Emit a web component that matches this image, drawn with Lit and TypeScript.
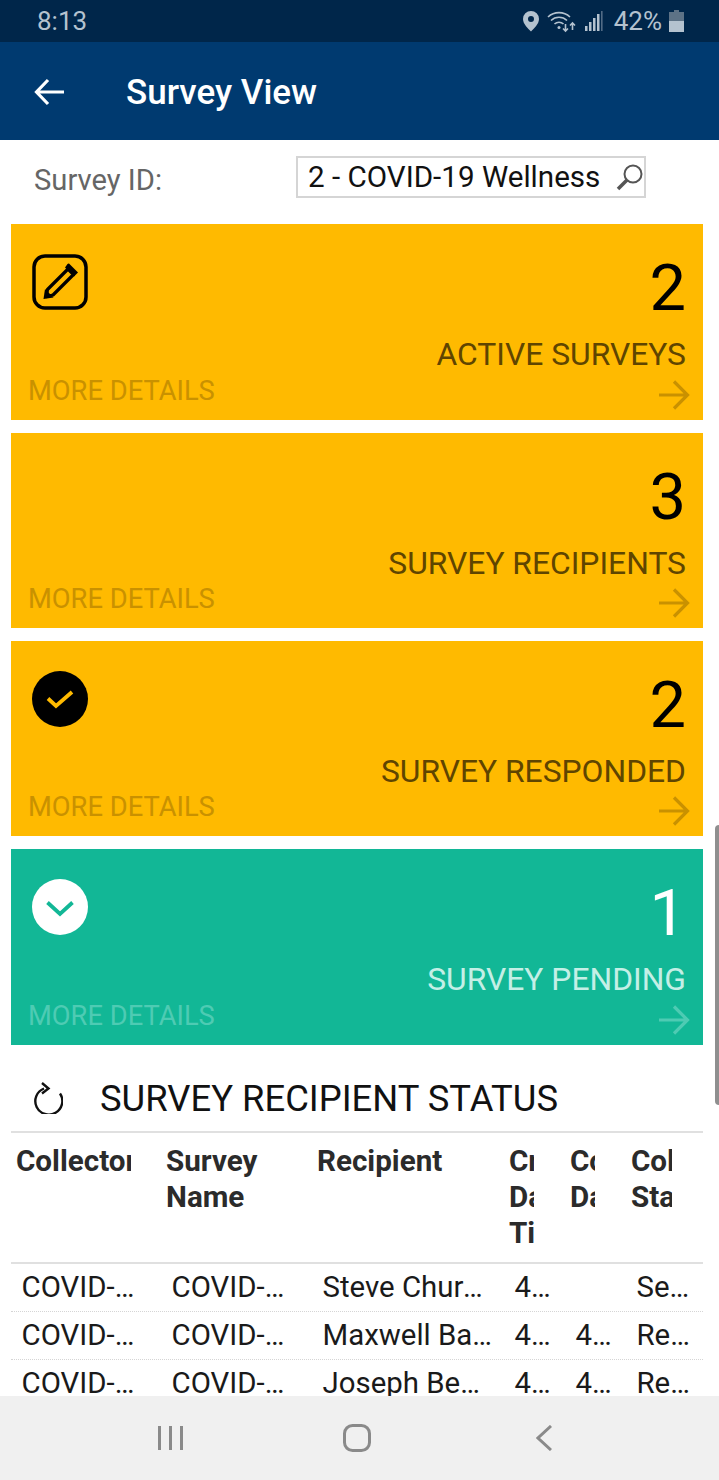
import { LitElement, css, html, svg } from 'lit'
import { customElement } from 'lit/decorators.js'

type Card = { n: string; label: string; icon: 'edit' | 'check' | 'chevron' | null; teal?: boolean }

const CARDS: Card[] = [
  { n: '2', label: 'ACTIVE SURVEYS', icon: 'edit' },
  { n: '3', label: 'SURVEY RECIPIENTS', icon: null },
  { n: '2', label: 'SURVEY RESPONDED', icon: 'check' },
  { n: '1', label: 'SURVEY PENDING', icon: 'chevron', teal: true },
]

const HEADERS = ['Collector', 'Survey Name', 'Recipient', 'Created Date Time', 'Completed Date', 'Collector Status']

const ROWS = [
  ['COVID-19 Wellness', 'COVID-19 Wellness', 'Steve Churchill', '4/10/2020', '', 'Sent'],
  ['COVID-19 Wellness', 'COVID-19 Wellness', 'Maxwell Barnes', '4/10/2020', '4/10/2020', 'Responded'],
  ['COVID-19 Wellness', 'COVID-19 Wellness', 'Joseph Bennett', '4/10/2020', '4/10/2020', 'Responded'],
]

const cardIcons = {
  edit: svg`<svg class="icon" viewBox="0 0 56 56" fill="none">
    <rect x="2" y="2" width="52" height="52" rx="11" stroke="#000" stroke-width="3.500"/>
    <path d="M14.500 42.500l1-7L36 15l5.500 5.500L21 41z" stroke="#000" stroke-width="3.200" stroke-linejoin="round"/>
    <path d="M37 9.500l9 9-4 4-9-9 2.500-3.500a1.500 1.500 0 0 1 1.500-.5z" fill="#000"/>
    <path d="M11.500 45l1.500-10 8.500 8.500z" fill="#000"/>
  </svg>`,
  check: svg`<svg class="icon" viewBox="0 0 56 56">
    <circle cx="28" cy="28" r="28" fill="#000"/>
    <path d="M16 27.500l8 7.500 16-14" fill="none" stroke="#ffba00" stroke-width="3.800"/>
  </svg>`,
  chevron: svg`<svg class="icon" viewBox="0 0 56 56">
    <circle cx="28" cy="28" r="28" fill="#fff"/>
    <path d="M15.500 23.500L28 35l12.500-11.500" fill="none" stroke="#12b796" stroke-width="3.800"/>
  </svg>`,
}

@customElement('app-root')
export class AppRoot extends LitElement {
  render() {
    return html`
      <div class="status">
        <span class="time">8:13</span>
        <div class="status-right">
          <svg width="18" height="22" viewBox="0 0 18 22">
            <path fill-rule="evenodd" fill="#b4c2cf" d="M9 1a8 8 0 0 1 8 8c0 5-5 9.500-8 12.500C6 18.500 1 14 1 9a8 8 0 0 1 8-8zm0 5a3 3 0 1 0 0 6 3 3 0 0 0 0-6z"/>
          </svg>
          <svg width="30" height="24" viewBox="0 0 30 24" fill="none" stroke="#b4c2cf" stroke-width="1.600">
            <path d="M1 8a16 16 0 0 1 22 0M4 11.500a11.500 11.500 0 0 1 16 0M7.500 15a6.500 6.500 0 0 1 9 0"/>
            <circle cx="12" cy="18.500" r="1.500" fill="#b4c2cf" stroke="none"/>
            <path d="M18.500 15v7M16 19.500l2.500 2.500 2.500-2.500M25.500 21v-7M23 16.500l2.500-2.500 2.500 2.500"/>
          </svg>
          <svg class="signal" width="20" height="22" viewBox="0 0 20 22" fill="#b4c2cf">
            <rect x="1" y="16" width="2.500" height="5"/>
            <rect x="5" y="12" width="2.500" height="9"/>
            <rect x="9" y="8" width="2.500" height="13"/>
            <rect x="13" y="4" width="2.500" height="17"/>
            <rect x="17" y="1" width="1.600" height="20" opacity=".45"/>
          </svg>
          <span class="pct">42%</span>
          <svg width="15" height="22" viewBox="0 0 15 22">
            <path fill="#5d7286" d="M5 0h5v2h5v20H0V2h5z"/>
            <rect x="0" y="11" width="15" height="11" fill="#b4c2cf"/>
          </svg>
        </div>
      </div>

      <header class="bar">
        <svg class="back" width="30" height="28" viewBox="0 0 30 28" fill="none" stroke="#fff" stroke-width="3.200">
          <path d="M30 14H3M14 2L2.500 14 14 26"/>
        </svg>
        <span class="title">Survey View</span>
      </header>

      <div class="content">
        <div class="filter">
          <span class="filter-label">Survey ID:</span>
          <div class="search">
            <span>2 - COVID-19 Wellness</span>
            <svg width="28" height="28" viewBox="0 0 28 28" fill="none" stroke="#555">
              <circle cx="17" cy="11" r="8.500" stroke-width="2"/>
              <path d="M11 17L2 26" stroke-width="3.500"/>
            </svg>
          </div>
        </div>

        <div class="cards">
          ${CARDS.map(
            (c) => html`
              <div class="card ${c.teal ? 'teal' : ''}">
                <div class="card-top">
                  <div class="icon-box">${c.icon ? cardIcons[c.icon] : ''}</div>
                  <div class="figures">
                    <div class="num">${c.n}</div>
                    <div class="label">${c.label}</div>
                  </div>
                </div>
                <div class="card-foot">
                  <span class="more">MORE DETAILS</span>
                  <svg class="arrow" width="32" height="30" viewBox="0 0 32 30" fill="none" stroke="currentColor" stroke-width="3.200">
                    <path d="M1 15h28M16 1.500L29.500 15 16 28.500"/>
                  </svg>
                </div>
              </div>
            `,
          )}
        </div>

        <div class="section">
          <svg width="30" height="32" viewBox="0 0 30 32" fill="none" stroke="#111" stroke-width="2.400">
            <path d="M11 6.500a13.500 13.500 0 1 0 16 5M9 1l6.500 5.500L9 11.500"/>
          </svg>
          <span>SURVEY RECIPIENT STATUS</span>
        </div>

        <div class="table">
          <div class="row head">
            ${HEADERS.map((h) => html`<div class="th">${h}</div>`)}
          </div>
          ${ROWS.map(
            (r) => html`
              <div class="row body">
                ${r.map((v) => html`<div class="td">${v}</div>`)}
              </div>
            `,
          )}
        </div>
        <div class="scroll-thumb"></div>
      </div>

      <nav class="nav">
        <svg width="26" height="26" viewBox="0 0 26 26" fill="#8a8a8a">
          <rect x="0" y="1" width="3" height="24"/>
          <rect x="11" y="1" width="3" height="24"/>
          <rect x="22" y="1" width="3" height="24"/>
        </svg>
        <svg width="28" height="28" viewBox="0 0 28 28" fill="none" stroke="#8a8a8a" stroke-width="3">
          <rect x="1.500" y="1.500" width="25" height="25" rx="8"/>
        </svg>
        <svg width="16" height="26" viewBox="0 0 16 26" fill="none" stroke="#8a8a8a" stroke-width="3">
          <path d="M15 1L2 13l13 12"/>
        </svg>
      </nav>
    `
  }

  static styles = css`
    :host {
      display: flex;
      flex-direction: column;
      height: 1480px;
      overflow: hidden;
      font-family: Roboto, 'Liberation Sans', sans-serif;
      background: #fff;
    }

    .status {
      flex: none;
      height: 42px;
      display: flex;
      align-items: center;
      justify-content: space-between;
      padding: 0 35px 0 37px;
      box-sizing: border-box;
      background: #00264a;
      color: #b4c2cf;
      font-size: 26px;
    }

    .status-right {
      display: flex;
      align-items: center;
      gap: 7px;
    }

    .pct {
      margin-left: 3px;
    }

    .bar {
      flex: none;
      height: 98px;
      box-sizing: border-box;
      display: flex;
      align-items: center;
      gap: 62px;
      padding: 2px 0 0 34px;
      background: #003a70;
      color: #fff;
    }

    .title {
      font-size: 35px;
      font-weight: 500;
    }

    .content {
      flex: 1;
      min-height: 0;
      position: relative;
      overflow: hidden;
    }

    .filter {
      height: 84px;
      display: flex;
      align-items: flex-start;
      padding: 16px 73px 0 34px;
      box-sizing: border-box;
      justify-content: space-between;
    }

    .filter-label {
      margin-top: 7px;
      font-size: 29.200px;
      color: #666;
    }

    .search {
      width: 350px;
      height: 42px;
      box-sizing: border-box;
      border: 2px solid #d5d5d5;
      display: flex;
      align-items: center;
      justify-content: space-between;
      padding: 0 0 0 10px;
      font-size: 29.600px;
      color: #111;
    }

    .cards {
      display: flex;
      flex-direction: column;
      gap: 13px;
      padding: 0 16px 0 11px;
    }

    .card {
      height: 195px;
      box-sizing: border-box;
      display: flex;
      flex-direction: column;
      justify-content: space-between;
      padding: 30px 13px 10px 18px;
      background: #ffba00;
      color: #c99100;
    }

    .card:first-child,
    .card:last-child {
      height: 196px;
    }

    .card.teal {
      background: #12b796;
      color: #4ecbb3;
    }

    .card-top {
      display: flex;
      justify-content: space-between;
    }

    .icon-box {
      margin-left: 3px;
    }

    .icon {
      display: block;
      width: 56px;
      height: 56px;
    }

    .figures {
      text-align: right;
      margin-top: -13px;
      margin-right: 4px;
    }

    .num {
      font-size: 65px;
      line-height: 94px;
      color: #000;
    }

    .label {
      font-size: 31.800px;
      line-height: 38px;
      color: #5f4500;
    }

    .teal .num {
      color: #fff;
    }

    .teal .label {
      color: #c4efe6;
    }

    .card-foot {
      display: flex;
      justify-content: space-between;
      align-items: flex-end;
    }

    .more {
      font-size: 27.300px;
      line-height: 34px;
      padding-bottom: 2px;
      margin-left: -1px;
    }

    .arrow {
      display: block;
    }

    .section {
      display: flex;
      align-items: center;
      gap: 37px;
      height: 66px;
      margin-top: 20px;
      padding-left: 33px;
      font-size: 36.400px;
      color: #111;
    }

    .table {
      margin: 0 16px 0 11px;
      border-top: 2px solid #e0e0e0;
    }

    .row {
      display: grid;
      grid-template-columns: 150px 151px 192px 61px 61px 77px;
    }

    .row.head {
      height: 131px;
      box-sizing: border-box;
      border-bottom: 2px solid #e0e0e0;
    }

    .row.body {
      height: 48px;
      box-sizing: border-box;
      border-bottom: 1px dotted #d5d5d5;
    }

    .th {
      margin: 10px 30px 0 5px;
      overflow: hidden;
      font-size: 29.600px;
      font-weight: 700;
      line-height: 36px;
      color: #2b2b2b;
    }

    .th:nth-child(n + 4) {
      margin-right: 31px;
    }

    .td {
      padding: 0 20px 0 10.500px;
      overflow: hidden;
      white-space: nowrap;
      text-overflow: ellipsis;
      font-size: 29.400px;
      line-height: 47px;
      color: #1a1a1a;
    }

    .td:nth-child(n + 3) {
      padding-right: 9.500px;
    }

    .scroll-thumb {
      position: absolute;
      top: 685px;
      right: 0;
      width: 4px;
      height: 280px;
      border-radius: 4px 0 0 4px;
      background: #8f8f8f;
    }

    .nav {
      flex: none;
      height: 84px;
      display: grid;
      grid-template-columns: 185px 193px 16px;
      align-items: center;
      background: #f0f0f0;
      padding-left: 158px;
      box-sizing: border-box;
    }
  `
}

declare global {
  interface HTMLElementTagNameMap {
    'app-root': AppRoot
  }
}
